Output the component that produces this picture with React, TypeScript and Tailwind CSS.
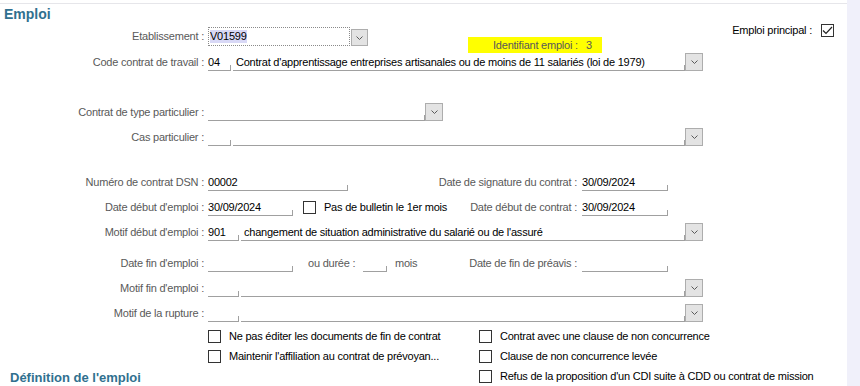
import React from "react";

function Label({ children }: { children: React.ReactNode }) {
  return <div className="h-[17px] w-[204px] shrink-0 whitespace-nowrap text-right leading-[16px]">{children}</div>;
}

function SideLabel({ children }: { children: React.ReactNode }) {
  return (
    <div className="flex h-[17px] w-[127px] shrink-0 justify-end whitespace-nowrap leading-[16px]">{children}</div>
  );
}

function Field({ className, value, pad = false }: { className: string; value?: string; pad?: boolean }) {
  return (
    <div className={`flex h-[17px] shrink-0 items-end border-b border-[#a0a0a0] ${className}`}>
      <span className={`flex-1 self-start truncate whitespace-nowrap leading-[16px] text-black ${pad ? "pl-[3px]" : ""}`}>
        {value}
      </span>
      <span className="h-[5px] w-px bg-[#a0a0a0]" />
    </div>
  );
}

function DropButton({ small = false }: { small?: boolean }) {
  return (
    <div
      className={`flex shrink-0 items-center justify-center border border-[#adadad] bg-[#e3e3e3] ${
        small ? "h-[17px] w-[17px]" : "h-[18px] w-[18px]"
      }`}
    >
      <svg width="7" height="4" viewBox="0 0 7 4">
        <path d="M0.5 0.5 L3.5 3.5 L6.5 0.5" stroke="#5a5a5a" fill="none" strokeWidth="1" />
      </svg>
    </div>
  );
}

function Box({ checked = false, className = "" }: { checked?: boolean; className?: string }) {
  return (
    <div className={`flex h-[13px] w-[13px] shrink-0 items-center justify-center border border-[#333] bg-white ${className}`}>
      {checked ? (
        <svg width="11" height="9" viewBox="0 0 11 9">
          <path d="M1 4.5 L4 7.5 L10 1" stroke="#222" fill="none" strokeWidth="1.2" />
        </svg>
      ) : null}
    </div>
  );
}

function Combo({ label, code, text, codeWidth, textWidth }: { label: string; code?: string; text?: string; codeWidth: string; textWidth: string }) {
  return (
    <div className="flex h-[25px] items-end">
      <Label>{label}</Label>
      <Field className={`ml-[4px] ${codeWidth}`} value={code} />
      <Field className={`ml-[2px] ${textWidth}`} value={text} pad />
      <DropButton />
    </div>
  );
}

function CheckItem({ label, className = "" }: { label: string; className?: string }) {
  return (
    <div className={`flex items-center gap-[8px] whitespace-nowrap text-black ${className}`}>
      <Box />
      <span className="leading-[16px]">{label}</span>
    </div>
  );
}

export default function App() {
  return (
    <div className="flex h-[386px] w-[860px] overflow-hidden bg-white font-['Liberation_Sans',Arial,sans-serif] text-[11px] tracking-[-0.22px] text-[#595959]">
      <main className="w-[847px] shrink-0">
        <div className="mt-[3px] border-t border-[#e6e6ea]" />
        <h1 className="h-[20px] pl-[4px] text-[14px] font-bold leading-[20px] tracking-normal text-[#30708f]">Emploi</h1>

        <div className="flex h-[22px] items-end">
          <div className="h-[19px] w-[204px] shrink-0 text-right leading-[19px]">Etablissement :</div>
          <div className="ml-[4px] flex h-[19px] w-[142px] shrink-0 items-center border border-dotted border-[#8a8a8a] pl-[1px]">
            <span className="bg-[#d8d8f6] leading-[13px] text-black">V01599</span>
          </div>
          <div className="ml-[1px]">
            <DropButton small />
          </div>
          <div className="ml-[100px] mt-[13px] flex h-[16px] w-[134px] shrink-0 items-center self-start whitespace-nowrap bg-[#ffff00] pl-[25px]">
            <span>Identifiant emploi :</span>
            <span className="ml-[8px]">3</span>
          </div>
          <div className="ml-auto mr-[13px] flex items-center gap-[9px] self-start whitespace-nowrap text-black">
            <span className="leading-[13px]">Emploi principal :</span>
            <Box checked />
          </div>
        </div>

        <Combo
          label="Code contrat de travail :"
          code="04"
          text="Contrat d'apprentissage entreprises artisanales ou de moins de 11 salariés (loi de 1979)"
          codeWidth="w-[23px]"
          textWidth="w-[452px]"
        />

        <div className="h-[25px]" />

        <div className="flex h-[25px] items-end">
          <Label>Contrat de type particulier :</Label>
          <Field className="ml-[4px] w-[217px]" />
          <DropButton />
        </div>

        <Combo label="Cas particulier :" codeWidth="w-[23px]" textWidth="w-[452px]" />

        <div className="h-[20px]" />

        <div className="flex h-[25px] items-end">
          <div className="flex w-[450px] shrink-0 items-end">
            <Label>Numéro de contrat DSN :</Label>
            <Field className="ml-[4px] w-[140px]" value="00002" />
          </div>
          <SideLabel>Date de signature du contrat :</SideLabel>
          <Field className="ml-[5px] w-[86px]" value="30/09/2024" />
        </div>

        <div className="flex h-[25px] items-end">
          <div className="flex w-[450px] shrink-0 items-end">
            <Label>Date début d'emploi :</Label>
            <Field className="ml-[4px] w-[85px]" value="30/09/2024" />
            <Box className="mb-[2px] ml-[10px]" />
            <span className="ml-[8px] h-[17px] whitespace-nowrap leading-[16px] text-black">Pas de bulletin le 1er mois</span>
          </div>
          <SideLabel>Date début de contrat :</SideLabel>
          <Field className="ml-[5px] w-[86px]" value="30/09/2024" />
        </div>

        <Combo
          label="Motif début d'emploi :"
          code="901"
          text="changement de situation administrative du salarié ou de l'assuré"
          codeWidth="w-[31px]"
          textWidth="w-[444px]"
        />

        <div className="h-[6px]" />

        <div className="flex h-[25px] items-end">
          <div className="flex w-[450px] shrink-0 items-end">
            <Label>Date fin d'emploi :</Label>
            <Field className="ml-[4px] w-[85px]" />
            <span className="ml-[15px] h-[17px] w-[55px] shrink-0 whitespace-nowrap leading-[16px]">ou durée :</span>
            <Field className="w-[24px]" />
            <span className="ml-[8px] h-[17px] whitespace-nowrap leading-[16px]">mois</span>
          </div>
          <SideLabel>Date de fin de préavis :</SideLabel>
          <Field className="ml-[5px] w-[86px]" />
        </div>

        <Combo label="Motif fin d'emploi :" codeWidth="w-[31px]" textWidth="w-[444px]" />
        <Combo label="Motif de la rupture :" codeWidth="w-[31px]" textWidth="w-[444px]" />

        <div className="h-[4px]" />

        <div className="flex h-[20px] items-center pl-[208px]">
          <CheckItem className="w-[271px] shrink-0" label="Ne pas éditer les documents de fin de contrat" />
          <CheckItem label="Contrat avec une clause de non concurrence" />
        </div>
        <div className="flex h-[20px] items-center pl-[208px]">
          <CheckItem className="w-[271px] shrink-0" label="Maintenir l'affiliation au contrat de prévoyan..." />
          <CheckItem label="Clause de non concurrence levée" />
        </div>
        <div className="flex h-[20px] items-center">
          <h2 className="w-[479px] shrink-0 pl-[10px] pt-[4px] text-[13px] font-bold leading-[16px] tracking-normal text-[#30708f]">
            Définition de l'emploi
          </h2>
          <CheckItem label="Refus de la proposition d'un CDI suite à CDD ou contrat de mission" />
        </div>
      </main>
      <aside className="flex-1 bg-[#f0f0fa]" />
    </div>
  );
}
